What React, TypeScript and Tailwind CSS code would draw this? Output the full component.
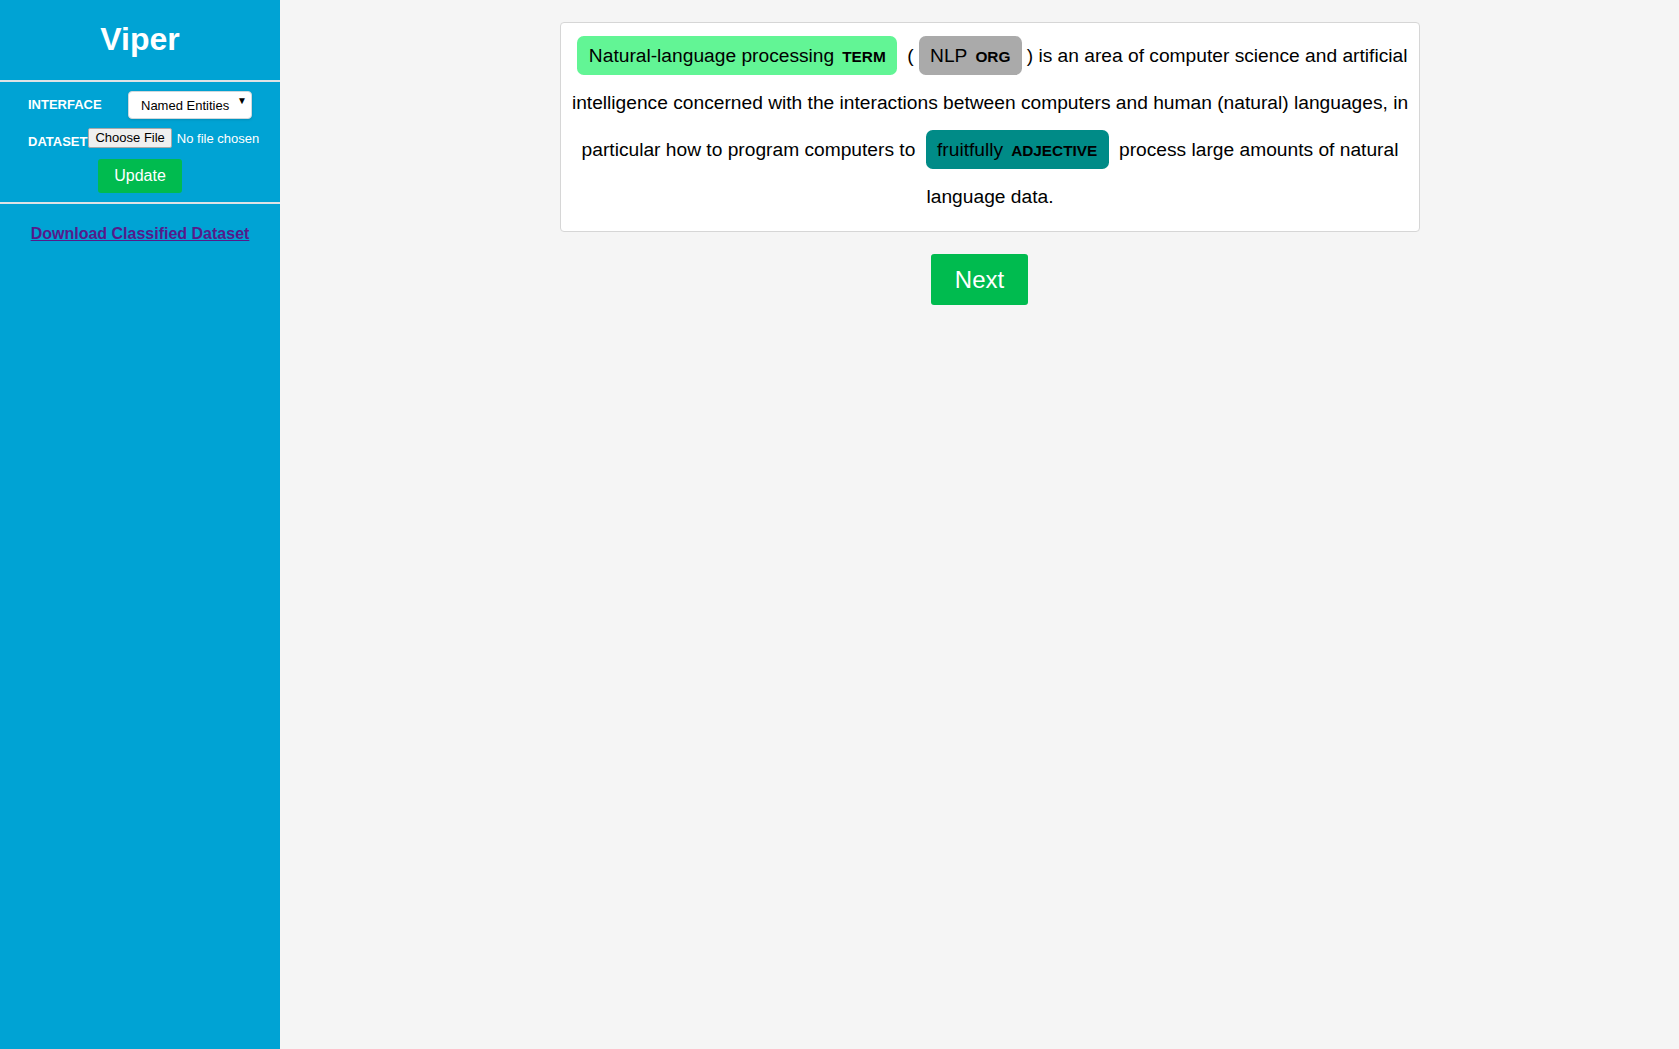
import React from 'react';

type Ent = { text: string; label: string; bg: string };

function Mark({ ent }: { ent: Ent }) {
  return (
    <mark
      className={`${ent.bg} text-black px-[0.6em] py-[0.45em] mx-[0.25em] leading-none rounded-[0.35em]`}
    >
      {ent.text}
      <span className="text-[0.8em] font-bold leading-none uppercase align-middle ml-2">{ent.label}</span>
    </mark>
  );
}

const term: Ent = { text: 'Natural-language processing', label: 'TERM', bg: 'bg-[#62f595]' };
const org: Ent = { text: 'NLP', label: 'ORG', bg: 'bg-[#aaaaaa]' };
const adj: Ent = { text: 'fruitfully', label: 'ADJECTIVE', bg: 'bg-[#008b87]' };

function Sidebar() {
  return (
    <aside className="w-[280px] shrink-0 min-h-screen bg-[#00a3d4] text-white">
      <h1 className="text-[32px] font-bold text-center leading-[37px] mt-[21px] mb-[22px]">Viper</h1>
      <div className="h-[2px] bg-[#dde3e6]" />

      <div className="flex items-center pl-[28px] mt-[9px]">
        <span className="w-[100px] text-[13px] font-bold leading-[15px] -mt-[2px]">INTERFACE</span>
        <div className="relative w-[124px] h-[28px] bg-white rounded-[4px] border border-[#cfd8dc] shadow-sm text-black text-[13px] pl-[12px] pt-[6px] leading-[15px]">
          Named Entities
          <span className="absolute right-[4px] top-[4px] text-[10px] leading-none">▼</span>
        </div>
      </div>

      <div className="flex items-end pl-[28px] mt-[9px]">
        <span className="text-[13px] font-bold leading-[15px] -mb-[1px]">DATASET</span>
        <span className="ml-[1px] h-[20px] px-[6px] bg-[#efefef] border border-[#a8a8a8] rounded-[2px] text-black text-[13px] leading-[18px]">
          Choose File
        </span>
        <span className="ml-[5px] text-[13px] leading-[18px]">No file chosen</span>
      </div>

      <div className="flex justify-center mt-[11px]">
        <button className="bg-[#00bb4f] text-white text-[16px] leading-[18px] px-[16px] py-[8px] rounded-[3px]">
          Update
        </button>
      </div>

      <div className="h-[2px] bg-[#dde3e6] mt-[9px]" />

      <div className="text-center mt-[18px]">
        <a href="#" className="text-[16px] font-bold underline text-[#551a8b] leading-[18px]">
          Download Classified Dataset
        </a>
      </div>
    </aside>
  );
}

export default function App() {
  return (
    <div className="flex min-h-screen bg-[#f5f5f5] font-['Liberation_Sans',Arial,sans-serif]">
      <Sidebar />
      <main className="flex-1">
        <div className="ml-[280px] mt-[22px] w-[860px] bg-white border border-[#d6d6d6] rounded-[4px] px-[10px] pt-[9px] pb-[11px] text-center text-[19.2px] leading-[47px] text-black">
          <Mark ent={term} /> (<Mark ent={org} />) is an area of computer science and artificial intelligence
          concerned with the interactions between computers and human (natural) languages, in particular how to
          program computers to <Mark ent={adj} /> process large amounts of natural language data.
        </div>
        <div className="flex justify-center mt-[22px]">
          <button className="bg-[#00bb4f] text-white text-[24px] leading-[27px] px-[24px] py-[12px] rounded-[3px]">
            Next
          </button>
        </div>
      </main>
    </div>
  );
}
